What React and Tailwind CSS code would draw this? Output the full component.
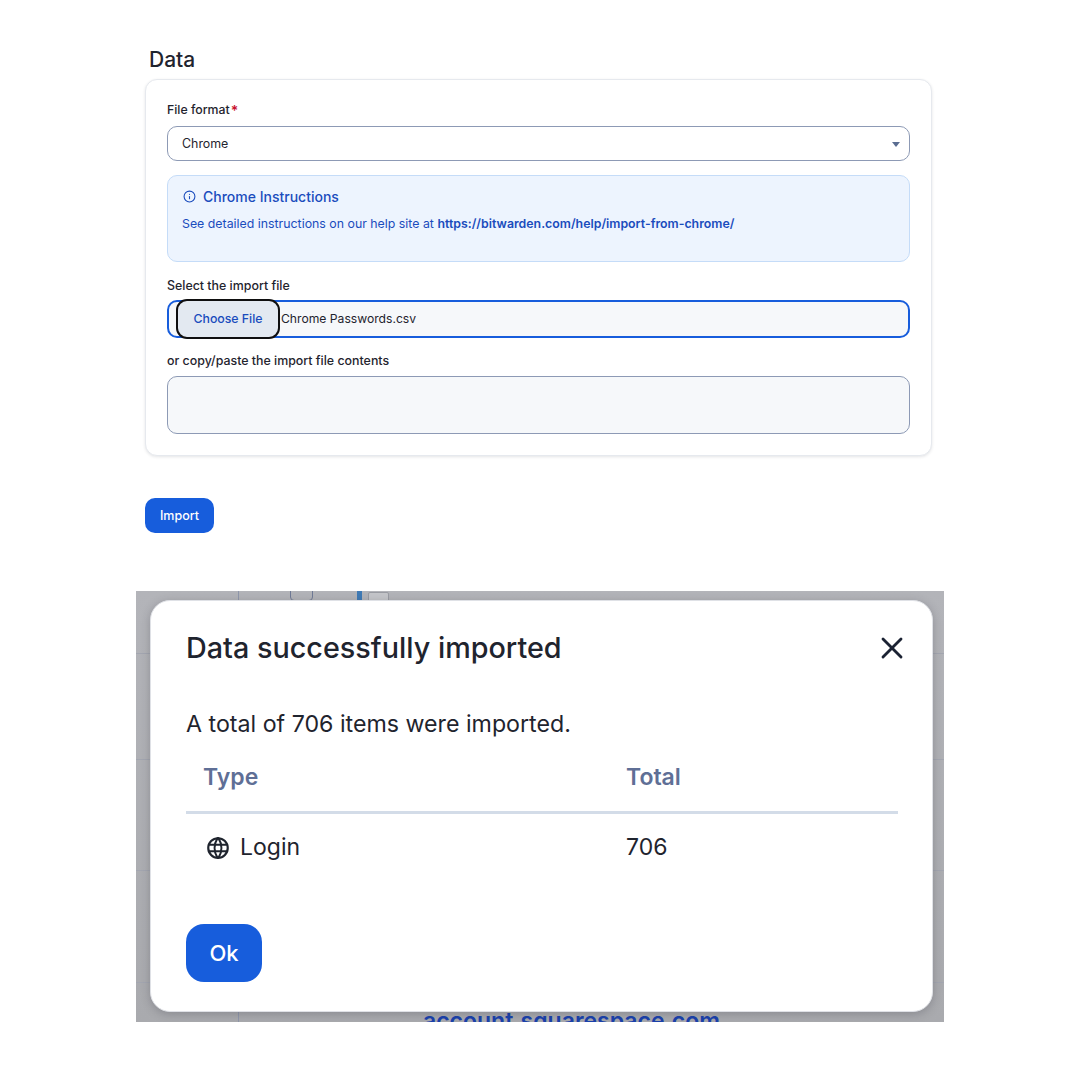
import { Info, X } from "lucide-react";
import { TbWorld } from "react-icons/tb";

const font = { fontFamily: "Inter, 'Liberation Sans', sans-serif" };

const DataForm = () => {
  return (
    <div className="ml-[145px] w-[787px] pt-[47px]">
      <h2 className="ml-[4px] h-[32px] text-[21px] leading-[25px] font-medium text-[#1f242e]">Data</h2>

      <div className="h-[377px] rounded-[12px] border border-[#e6e9ee] bg-white px-[21px] pt-[21px] shadow-[0_1px_3px_rgba(30,40,60,0.12)]">
        <label className="flex h-[18px] items-center text-[12.3px] font-medium text-[#1f242e]">
          File format<span className="mt-[2px] ml-[1px] text-[14px] leading-[14px] font-semibold text-[#c8102e]">*</span>
        </label>

        <div className="relative mt-[7px] flex h-[35px] items-center rounded-[10px] border border-[#8d9ab5] bg-white pt-[1px] pl-[14px] text-[12.4px] text-[#1f242e]">
          Chrome
          <span className="absolute top-[15px] right-[9px] h-0 w-0 border-x-[4px] border-t-[5px] border-x-transparent border-t-[#5a6d91]"></span>
        </div>

        <div className="mt-[14px] h-[87px] rounded-[10px] border border-[#c5dcf8] bg-[#edf4fe] px-[14px] pt-[11px]">
          <div className="flex h-[18px] items-center text-[#1a4cbd]">
            <Info size={13} strokeWidth={2} className="ml-[1px]" />
            <span className="ml-[7px] text-[14px] font-medium">Chrome Instructions</span>
          </div>
          <p className="mt-[10px] text-[12.35px] leading-[18px] text-[#1a4cbd]">
            See detailed instructions on our help site at{" "}
            <span className="font-semibold">https://bitwarden.com/help/import-from-chrome/</span>
          </p>
        </div>

        <label className="mt-[14px] flex h-[18px] items-center pt-[2px] text-[12.4px] font-medium text-[#1f242e]">Select the import file</label>

        <div className="mt-[6px] flex h-[38px] items-center rounded-[10px] border-2 border-[#175ddc] bg-[#f6f8fa]">
          <div className="z-10 ml-[7px] flex h-[40px] w-[104px] shrink-0 items-center justify-center rounded-[11px] border-2 border-[#0f0f10] bg-[#e3e9f1] pt-[1px] text-[12.3px] font-medium text-[#1a4cbd]">
            Choose File
          </div>
          <span className="ml-[1px] pt-[1px] text-[12.15px] text-[#1f242e]">Chrome Passwords.csv</span>
        </div>

        <label className="mt-[13px] flex h-[18px] items-center pt-[2px] text-[12.4px] font-medium text-[#1f242e]">or copy/paste the import file contents</label>

        <div className="mt-[7px] h-[58px] rounded-[10px] border border-[#8d9ab5] bg-[#f6f8fa]"></div>
      </div>

      <button className="mt-[42px] flex h-[35px] w-[69px] items-center justify-center rounded-[10px] bg-[#175ddc] pt-[1px] text-[12.5px] font-medium text-white">
        Import
      </button>
    </div>
  );
};

const ImportDialog = () => {
  return (
    <div className="relative mt-[58px] ml-[136px] h-[431px] w-[808px] overflow-hidden bg-[linear-gradient(180deg,#b3b4b9,#a9aaae)]">
      {/* what shows behind the overlay */}
      <div className="absolute top-0 bottom-0 left-[102px] w-px bg-[#8f97ab]"></div>
      <div className="absolute top-[62px] right-0 left-0 h-px bg-[#a3a6b0]"></div>
      <div className="absolute top-[168px] right-0 left-0 h-px bg-[#a3a6b0]"></div>
      <div className="absolute top-[279px] right-0 left-0 h-px bg-[#a3a6b0]"></div>
      <div className="absolute top-[391px] right-0 left-0 h-px bg-[#a3a6b0]"></div>
      <div className="absolute top-[-8px] left-[154px] h-[18px] w-[23px] rounded-[4px] border border-[#6f7a96]"></div>
      <div className="absolute top-0 left-[221px] h-[10px] w-[5px] bg-[#3f7ab5]"></div>
      <div className="absolute top-[1px] left-[232px] h-[10px] w-[21px] rounded-t-[2px] border border-[#9a9ca3] bg-[#c5c6ca]"></div>
      <div className="absolute top-[416px] left-[287px] text-[23px] leading-[28px] font-semibold whitespace-nowrap text-[#1a41ac]">account.squarespace.com</div>

      <div className="absolute top-[9px] left-[14px] h-[412px] w-[783px] rounded-[20px] border border-[#dfe1e6] bg-white px-[35px] shadow-[0_2px_10px_rgba(40,40,50,0.25)]">
        <div className="flex h-[94px] items-center justify-between">
          <h1 className="text-[28.75px] leading-[36px] font-medium text-[#1f242e]">Data successfully imported</h1>
          <X size={36} strokeWidth={1.9} className="mr-[-13px] text-[#1b2233]" />
        </div>

        <p className="mt-[14px] text-[23.2px] leading-[30px] text-[#1f242e]">A total of 706 items were imported.</p>

        <div className="mt-[4px] w-[712px]">
          <div className="flex h-[71px] items-center border-b-[3px] border-[#d3dce8] text-[23px] font-semibold text-[#5f6f96]">
            <span className="ml-[17px] w-[423px]">Type</span>
            <span>Total</span>
          </div>
          <div className="flex h-[66px] items-center pt-[1px] text-[23px] text-[#1f242e]">
            <div className="ml-[19px] flex w-[421px] items-center">
              <TbWorld size={26} className="text-[#1f242e]" />
              <span className="ml-[9px]">Login</span>
            </div>
            <span>706</span>
          </div>
        </div>

        <button className="mt-[44px] flex h-[58px] w-[76px] items-center justify-center rounded-[18px] bg-[#175ddc] text-[22px] font-medium text-white">
          Ok
        </button>
      </div>
    </div>
  );
};

export default function App() {
  return (
    <div className="h-[1080px] w-[1080px] overflow-hidden bg-white" style={font}>
      <DataForm />
      <ImportDialog />
    </div>
  );
}
